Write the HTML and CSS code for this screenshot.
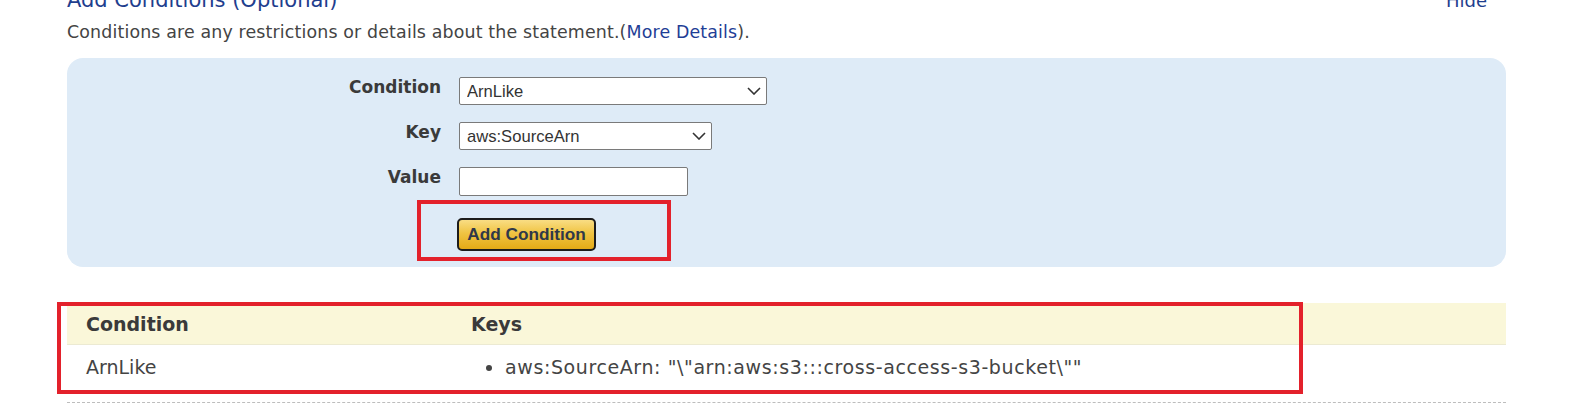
FILE: index.html
```html
<!DOCTYPE html>
<html lang="en">
<head>
<meta charset="utf-8">
<title>Add Conditions</title>
<link rel="stylesheet" href="styles.css">
</head>
<body>
<div class="page">
  <div class="title-row">
    <h2 class="title">Add Conditions (Optional)</h2>
    <a class="hide-link" href="#">Hide</a>
  </div>
  <p class="desc">Conditions are any restrictions or details about the statement.(<a class="link" href="#">More Details</a>).</p>

  <form class="panel">
    <div class="form-row">
      <label class="form-label" for="cond">Condition</label>
      <span class="select-wrap select-cond">
        <select id="cond" class="select"><option>ArnLike</option></select>
        <svg class="chev" width="14" height="8" viewBox="0 0 14 8"><path d="M1 1 L7 7 L13 1" fill="none" stroke="#333" stroke-width="1.6"/></svg>
      </span>
    </div>
    <div class="form-row">
      <label class="form-label" for="key">Key</label>
      <span class="select-wrap select-key">
        <select id="key" class="select"><option>aws:SourceArn</option></select>
        <svg class="chev" width="14" height="8" viewBox="0 0 14 8"><path d="M1 1 L7 7 L13 1" fill="none" stroke="#333" stroke-width="1.6"/></svg>
      </span>
    </div>
    <div class="form-row">
      <label class="form-label" for="val">Value</label>
      <input id="val" class="text-input" type="text">
    </div>
    <div class="form-row btn-row">
      <span></span>
      <button type="button" class="btn">Add Condition</button>
    </div>
  </form>

  <div class="table-wrap">
    <div class="tbl">
      <div class="th">Condition</div>
      <div class="th">Keys</div>
      <div class="td">ArnLike</div>
      <div class="td">
        <ul class="keys">
          <li>aws:SourceArn: "\"arn:aws:s3:::cross-access-s3-bucket\""</li>
        </ul>
      </div>
    </div>
  </div>
</div>
<div class="mark mark-btn"></div>
<div class="mark mark-table"></div>
</body>
</html>
```
FILE: styles.css
```css
html, body {
  margin: 0;
  padding: 0;
  background: #ffffff;
}
body {
  position: relative;
  height: 406px;
  overflow: hidden;
  font-family: "DejaVu Sans", Verdana, sans-serif;
  color: #444;
}
.page {
  margin-left: 67px;
  width: 1439px;
}
.title-row {
  display: flex;
  justify-content: space-between;
  align-items: baseline;
  margin-top: -12px;
  height: 24px;
  padding-right: 19px;
}
.title {
  margin: 0;
  font-size: 21px;
  font-weight: normal;
  line-height: 24px;
  color: #1f3e8e;
}
.hide-link {
  font-size: 18px;
  line-height: 24px;
  color: #1f3e8e;
  text-decoration: none;
}
.desc {
  margin: 9px 0 0 0;
  font-size: 17.4px;
  letter-spacing: 0.15px;
  line-height: 22px;
  color: #444;
}
.link {
  color: #1f3e96;
  text-decoration: none;
}
.panel {
  margin-top: 15px;
  background: #deebf7;
  border-radius: 16px;
  padding: 19px 0 16px 0;
  height: 209px;
  box-sizing: border-box;
}
.form-row {
  display: grid;
  grid-template-columns: 374px 1fr;
  column-gap: 18px;
  align-items: start;
  margin-bottom: 17px;
}
.form-label {
  text-align: right;
  font-weight: bold;
  font-size: 17px;
  line-height: 20px;
  color: #3a3a3a;
}
.select-wrap {
  position: relative;
  display: inline-block;
  height: 28px;
}
.select-cond { width: 308px; }
.select-key { width: 253px; }
.select {
  appearance: none;
  -webkit-appearance: none;
  width: 100%;
  height: 28px;
  box-sizing: border-box;
  border: 1px solid #7a7a7a;
  border-radius: 2px;
  background: #fff;
  padding: 0 30px 0 7px;
  font-family: "Liberation Sans", Arial, sans-serif;
  font-size: 16.6px;
  color: #333;
  margin: 0;
}
.chev {
  position: absolute;
  right: 6px;
  top: 10px;
  pointer-events: none;
}
.text-input {
  width: 229px;
  height: 29px;
  box-sizing: border-box;
  border: 1px solid #7a7a7a;
  border-radius: 2px;
  background: #fff;
  margin: 0;
  padding: 0 6px;
  font-family: "Liberation Sans", Arial, sans-serif;
  font-size: 16px;
}
.btn-row {
  margin-top: 22px;
  margin-bottom: 0;
}
.btn {
  margin-left: -2px;
  width: 139px;
  height: 33px;
  box-sizing: border-box;
  border: 2px solid #1c1c1c;
  border-radius: 5px;
  background: linear-gradient(to bottom, #f9dd84 0%, #f0c443 45%, #e4aa16 100%);
  font-family: "Liberation Sans", Arial, sans-serif;
  font-weight: bold;
  font-size: 17.2px;
  color: #2f3849;
  padding: 0;
  justify-self: start;
}
.table-wrap {
  margin-top: 36px;
  padding-bottom: 12px;
  border-bottom: 1px dashed #bdbdbd;
}
.tbl {
  display: grid;
  grid-template-columns: 385px 1fr;
}
.th {
  background: #faf7d9;
  height: 42px;
  line-height: 42px;
  padding-left: 19px;
  font-weight: bold;
  font-size: 19px;
  color: #3a3a3a;
  border-bottom: 1px solid #ecead2;
  box-sizing: border-box;
}
.td {
  height: 45px;
  line-height: 45px;
  padding-left: 19px;
  font-size: 19px;
  color: #444;
}
.keys {
  margin: 0;
  padding-left: 34px;
}
.keys li {
  letter-spacing: 0.6px;
}
.mark {
  position: absolute;
  border: 4px solid #e3212b;
  box-sizing: border-box;
  pointer-events: none;
}
.mark-btn {
  left: 417px;
  top: 200px;
  width: 254px;
  height: 61px;
}
.mark-table {
  left: 57px;
  top: 302px;
  width: 1246px;
  height: 92px;
}
```
